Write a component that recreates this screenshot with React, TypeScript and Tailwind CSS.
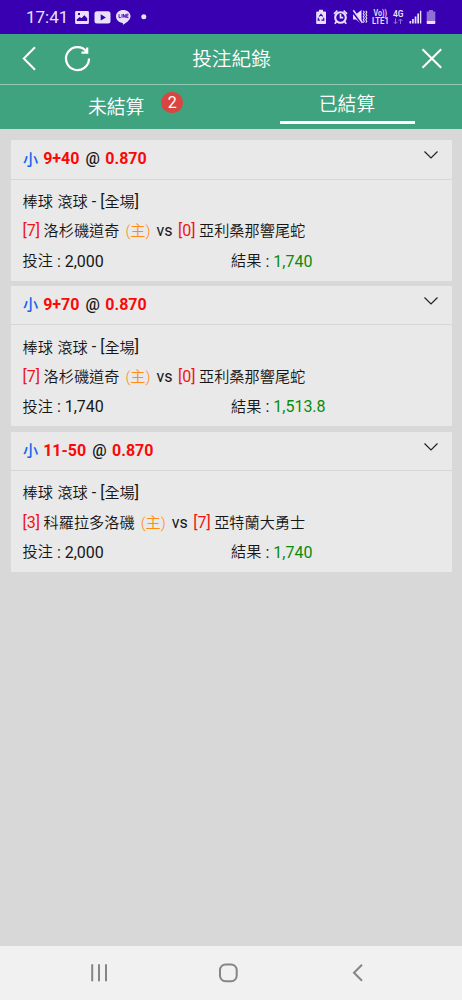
import React from "react";

type Bet = {
  line: string;
  odds: string;
  homeScore: number;
  home: string;
  awayScore: number;
  away: string;
  stake: string;
  result: string;
};

const bets: Bet[] = [
  { line: "9+40", odds: "0.870", homeScore: 7, home: "洛杉磯道奇", awayScore: 0, away: "亞利桑那響尾蛇", stake: "2,000", result: "1,740" },
  { line: "9+70", odds: "0.870", homeScore: 7, home: "洛杉磯道奇", awayScore: 0, away: "亞利桑那響尾蛇", stake: "1,740", result: "1,513.8" },
  { line: "11-50", odds: "0.870", homeScore: 3, home: "科羅拉多洛磯", awayScore: 7, away: "亞特蘭大勇士", stake: "2,000", result: "1,740" },
];

function StatusBar() {
  return (
    <div className="flex h-[34px] shrink-0 items-center bg-[#3900b1] text-[#e9e0fa]">
      <span className="ml-[26px] w-[49px] text-[17px] leading-none">17:41</span>
      <svg className="h-[34px] w-[80px]" viewBox="75 0 80 34" fill="currentColor">
        <path fillRule="evenodd" d="M76.300 11h11.400a1.200 1.200 0 0 1 1.200 1.200v10.600a1.200 1.200 0 0 1-1.200 1.200h-11.400a1.200 1.200 0 0 1-1.200-1.200v-10.600a1.200 1.200 0 0 1 1.200-1.200zM76.800 21h10.400v-2.700l-2.800-3-3 3-1.700-1.300-2.900 2.400zM78 13v2h2v-2z" />
        <path fillRule="evenodd" d="M97 11.200h11q2.500 0 2.500 2.500v7.400q0 2.500-2.500 2.500h-11q-2.500 0-2.500-2.500v-7.400q0-2.500 2.500-2.500zM100.700 14.200v6.300l5.200-3.100z" />
        <path d="M123.300 10c4 0 7.200 2.700 7.200 6.200 0 3.600-3.600 6-7 8.400-.7.400-.8-.1-.6-1.600-4-.4-6.900-3.200-6.900-6.800 0-3.500 3.300-6.200 7.300-6.200z" />
        <path d="M119 14.200v3.400h1.900M122 14.200v3.400M123.300 17.600v-3.400l2 3.400v-3.400M128.500 14.200h-1.800v3.400h1.800M126.700 15.900h1.600" fill="none" stroke="#3900b1" strokeWidth="0.900" />
        <circle cx="143.800" cy="16.700" r="2.500" />
      </svg>
      <div className="flex-1" />
      <svg className="h-[34px] w-[147px]" viewBox="315 0 147 34" fill="currentColor">
        <path d="M319 9.800h4v1.700h2.200q.8 0 .8.800v10.900q0 .8-.8.800h-8.200q-.8 0-.8-.8v-10.900q0-.8.800-.8h2z" />
        <path d="M319.200 16.500l1.800-2.200 1.800 2.200M323.600 17.800l.3 2.300h-2.500M319.900 20.100h-1.800l.3-2.300" stroke="#3900b1" strokeWidth="1.100" fill="none" />
        <circle cx="340.500" cy="17.500" r="5.300" fill="none" stroke="currentColor" strokeWidth="2.100" />
        <path d="M340.500 14v3.700h2.700M334 13.800l3.400-3.200M343.600 10.600l3.400 3.200M336.500 21.500l-1.700 2.300M344.500 21.500l1.700 2.300" stroke="currentColor" strokeWidth="1.700" fill="none" />
        <path d="M353 14.300h3l5.500-4.300v14l-5.500-4.500h-3z" />
        <path d="M352.500 11.200l9.500 12.300" stroke="#3900b1" strokeWidth="2.600" />
        <path d="M353.300 10.200l9.200 12.600" stroke="currentColor" strokeWidth="1.500" />
        <path d="M363.300 10.800l1 1.500-1 1.500 1 1.500-1 1.500 1 1.500-1 1.500 1 1.500-1 1.500M365.800 10.800l1 1.500-1 1.500 1 1.500-1 1.500 1 1.500-1 1.500 1 1.500-1 1.500" fill="none" stroke="currentColor" strokeWidth="1.100" />
        <g fontFamily="Roboto, sans-serif" fontWeight="600">
          <text x="373.500" y="16" fontSize="8.500" textLength="13.500" lengthAdjust="spacingAndGlyphs">Vo))</text>
          <text x="372" y="24" fontSize="8.500" textLength="17" lengthAdjust="spacingAndGlyphs">LTE1</text>
          <text x="393" y="16.700" fontSize="9" textLength="10.500" lengthAdjust="spacingAndGlyphs">4G</text>
        </g>
        <g fill="none" stroke="currentColor" opacity=".5">
          <path d="M395.500 18.500v5M393.500 21.800l2 2 2-2" />
          <path d="M400.500 24v-5M398.500 21l2-2 2 2" />
        </g>
        <path d="M409.500 21h1.700v2.500h-1.700zM412.100 19h1.700v4.500h-1.700zM414.700 16.500h1.700v7h-1.700zM417.300 13.500h1.700v10h-1.700zM419.900 10.700h1.400v12.800h-1.400z" />
        <path d="M429 10h4v1.500h2.300v9.500h-8.600v-9.500h2.300z" opacity=".5" />
        <path d="M426.700 21h8.600v2.200q0 .8-.8.800h-7q-.8 0-.8-.8z" />
      </svg>
    </div>
  );
}

function Header() {
  return (
    <header className="flex h-[51px] shrink-0 border-b border-[#91c8b3] font-[350] text-white">
      <svg className="h-[50px] w-[110px]" viewBox="0 34 110 50" fill="none" stroke="currentColor" strokeWidth="2">
        <path d="M35 47.200L23.800 58.500 35 69.700" />
        <path d="M89 58.500A11.500 11.500 0 1 1 86.800 51.800M87.200 47.500V52.600H81.500" strokeWidth="2.200" />
      </svg>
      <h1 className="flex flex-1 items-center justify-center pt-[2px] text-[19.700px] leading-none">
        <span className="translate-x-[0.500px]">投注紀錄</span>
      </h1>
      <svg className="h-[50px] w-[110px]" viewBox="352 34 110 50" fill="none" stroke="currentColor" strokeWidth="2">
        <path d="M422.500 49.300l18.700 18.500M441.200 49.300l-18.700 18.500" />
      </svg>
    </header>
  );
}

function Tabs() {
  return (
    <nav className="grid h-[44px] shrink-0 grid-cols-2 text-[18.800px] leading-none font-[350] text-white">
      <div className="flex pl-[88px]">
        <span className="pt-[14px]">未結算</span>
        <span className="mt-[7px] ml-[17px] flex h-[21px] w-[22px] items-center justify-center rounded-full bg-[#d94540] text-[16px] font-normal">
          2
        </span>
      </div>
      <div className="flex flex-col items-center justify-between pt-[11px] pb-[5px] pl-[1px]">
        <span>已結算</span>
        <span className="h-[3px] w-[135px] bg-white" />
      </div>
    </nav>
  );
}

function Cjk({ children, className = "font-[350]" }: { children: React.ReactNode; className?: string }) {
  return <span className={`text-[15.200px] ${className}`}>{children}</span>;
}

function BetCard({ bet }: { bet: Bet }) {
  return (
    <article className="h-[140.500px] bg-[#e9e9e9] text-[16px] leading-none text-[#161616]">
      <div className="flex h-[39.500px] items-center border-b border-[#d6d6d6] pr-[14px] pl-[12px] font-bold text-[#fb0808]">
        <Cjk className="translate-y-[1px] font-medium text-[#1261ef]">小</Cjk>
        <span className="ml-[5px]">{bet.line}</span>
        <span className="mr-[5.500px] ml-[6px] font-medium text-[#161616]">@</span>
        <span>{bet.odds}</span>
        <svg className="mb-[9px] ml-auto h-[9px] w-[14px]" viewBox="0 0 14 9" fill="none" stroke="#222" strokeWidth="1.200">
          <path d="M.5 1.500L7 8 13.500 1.500" />
        </svg>
      </div>
      <div className="flex flex-col pt-[7px] pl-[11.500px]">
        <div className="flex h-[30px] items-center">
          <Cjk className="translate-y-[0.500px] font-[350]">棒球</Cjk>
          <Cjk className="ml-[4.500px] translate-y-[0.500px] font-[350]">滾球</Cjk>
          <span className="mx-[4px]">-</span>
          <span>[</span>
          <Cjk className="translate-y-[0.500px] font-[350]">全場</Cjk>
          <span>]</span>
        </div>
        <div className="-mt-[0.500px] flex h-[30px] items-center whitespace-nowrap">
          <span className="text-[#ef1414]">[{bet.homeScore}]</span>
          <Cjk className="ml-[3.500px] translate-y-[1px] font-[350]">{bet.home}</Cjk>
          <Cjk className="ml-[6px] translate-y-[1px] font-[350] text-[#ff8c12]">(主)</Cjk>
          <span className="mr-[5.500px] ml-[6px]">vs</span>
          <span className="text-[#ef1414]">[{bet.awayScore}]</span>
          <Cjk className="ml-[3.500px] translate-y-[1px] font-[350]">{bet.away}</Cjk>
        </div>
        <div className="mt-[0.500px] flex h-[30px] items-center">
          <div className="flex w-[208.500px] items-center">
            <Cjk>投注</Cjk>
            <span className="ml-[4px]">: {bet.stake}</span>
          </div>
          <Cjk>結果</Cjk>
          <span className="mx-[4px]">:</span>
          <span className="text-[#0b8b0b]">{bet.result}</span>
        </div>
      </div>
    </article>
  );
}

function NavigationBar() {
  return (
    <footer className="h-[54px] shrink-0 bg-[#f1f1f1]">
      <svg className="h-[54px] w-full" viewBox="0 946 462 54" fill="none" stroke="#858585" strokeWidth="2">
        <path d="M92.200 965v15.500M99 965v15.500M106 965v15.500" strokeLinecap="round" />
        <rect x="220" y="964.500" width="16.700" height="16.700" rx="5.500" />
        <path d="M362 964.700l-8 8 8 8" />
      </svg>
    </footer>
  );
}

export default function App() {
  return (
    <div className="flex h-[1000px] w-[462px] flex-col overflow-hidden bg-[#40a380] font-['Roboto','Noto_Sans_CJK_TC',sans-serif]">
      <StatusBar />
      <Header />
      <Tabs />
      <main className="flex flex-1 flex-col gap-[5.300px] bg-[#d8d8d8] pt-[11px] pr-[10px] pl-[11px]">
        {bets.map((bet) => (
          <BetCard key={bet.line} bet={bet} />
        ))}
      </main>
      <NavigationBar />
    </div>
  );
}
